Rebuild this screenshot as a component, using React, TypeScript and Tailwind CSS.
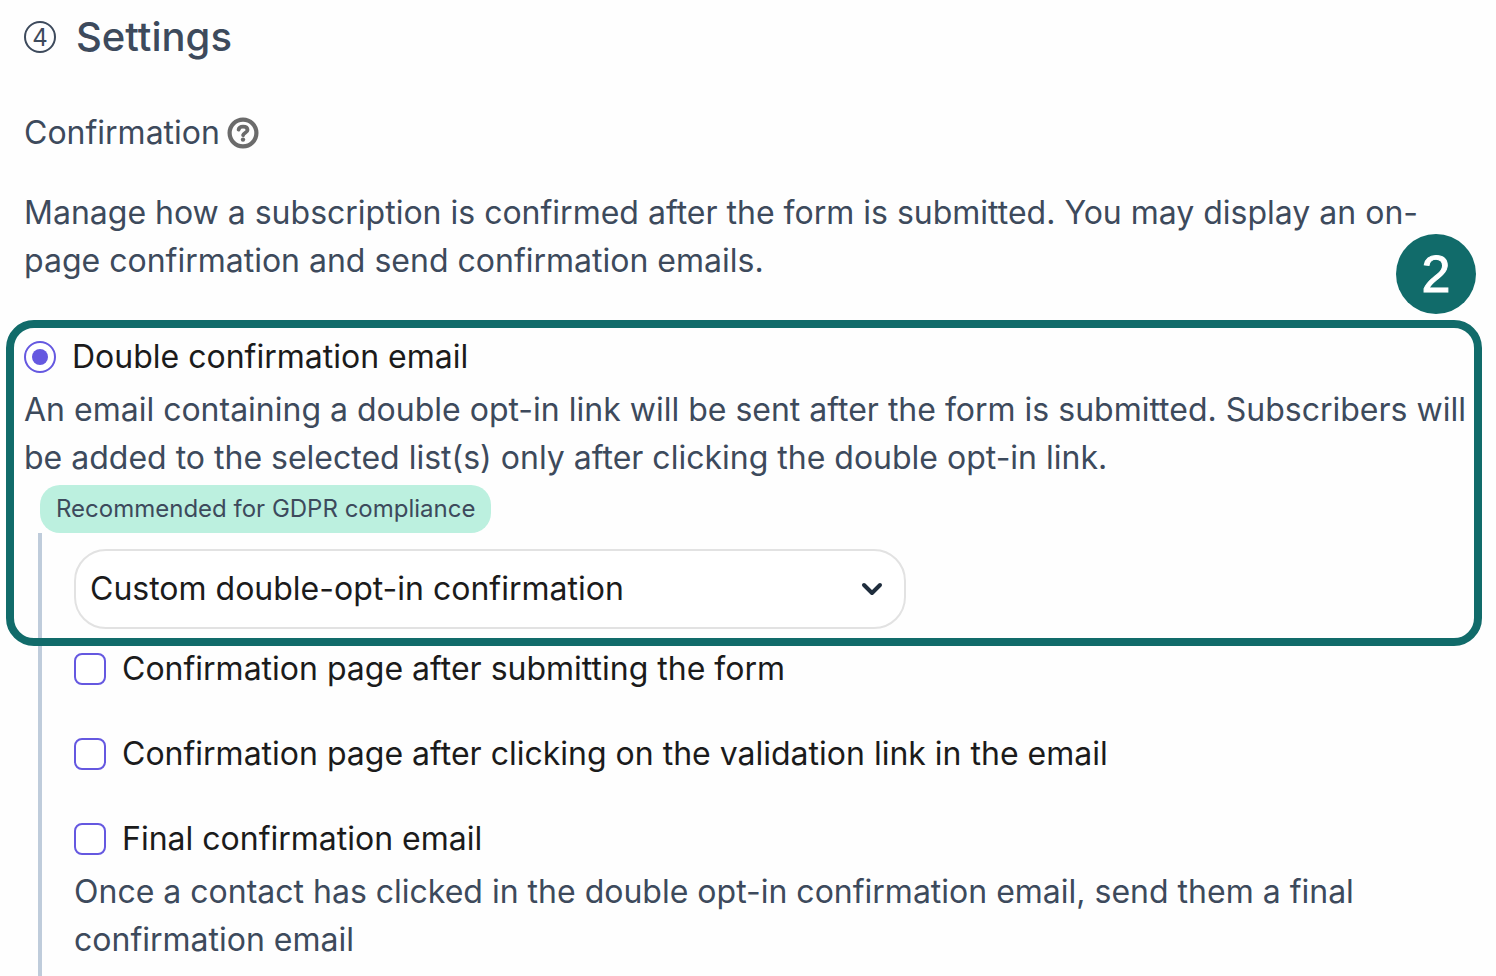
import { useState } from "react";

const checkboxClass =
  "size-8 shrink-0 appearance-none rounded-lg border-2 border-[#6558e0] bg-white checked:bg-[#6558e0]";

type OptionProps = {
  id: string;
  label: string;
};

function CheckboxOption({ id, label }: OptionProps) {
  return (
    <div className="flex items-center gap-4">
      <input type="checkbox" id={id} className={checkboxClass} />
      <label htmlFor={id} className="text-[#1b1b1b]">
        {label}
      </label>
    </div>
  );
}

function HelpIcon() {
  return (
    <svg viewBox="0 0 32 32" className="size-8" fill="none" stroke="#6b6b6b" aria-hidden="true">
      <circle cx="16" cy="16" r="13.4" strokeWidth="4.2" />
      <path d="M11.6 12.6c.4-2 2.200-3 4.400-3 2.600 0 4.500 1.200 4.500 3.300 0 2.700-3.900 2.800-4.400 5.300" strokeWidth="3.8" strokeLinecap="round" />
      <circle cx="16" cy="22.600" r="2.200" fill="#6b6b6b" stroke="none" />
    </svg>
  );
}

export default function App() {
  const [mode, setMode] = useState("double");

  return (
    <main className="min-h-screen bg-[#fefefe] px-6 pt-[13px] pb-3 font-['Inter',sans-serif] text-[32px] leading-[48px] text-[#3d4a5c]">
      <header className="flex items-center gap-5">
        <span className="flex size-8 items-center justify-center rounded-full border-2 border-[#3d4a5c] pt-0.5 text-2xl">
          4
        </span>
        <h1 className="text-[40px] leading-[48px] font-medium">Settings</h1>
      </header>

      <div className="mt-12 flex items-center gap-[7px]">
        <h2>Confirmation</h2>
        <button type="button" aria-label="Help">
          <HelpIcon />
        </button>
      </div>

      <p className="mt-8">
        Manage how a subscription is confirmed after the form is submitted. You may display an on-page
        confirmation and send confirmation emails.
      </p>

      <section className="relative mt-12">
        <div className="flex items-center gap-4">
          <input
            type="radio"
            id="double"
            name="confirmation"
            checked={mode === "double"}
            onChange={() => setMode("double")}
            className="flex size-8 shrink-0 appearance-none items-center justify-center rounded-full border-2 border-[#6558e0] bg-white before:size-4 before:rounded-full checked:before:bg-[#6558e0]"
          />
          <label htmlFor="double" className="text-[#1b1b1b]">
            Double confirmation email
          </label>
        </div>
        <p className="mt-[5px]">
          An email containing a double opt-in link will be sent after the form is submitted. Subscribers will
          be added to the selected list(s) only after clicking the double opt-in link.
        </p>
        <span className="mt-[3px] ml-4 block w-fit rounded-[20px] bg-[#bcf0df] px-4 text-2xl leading-[48px]">
          Recommended for GDPR compliance
        </span>
        <div className="ml-[14px] border-l-4 border-[#bfccdb] py-4 pl-8">
          <div className="relative max-w-[832px]">
            <select
              aria-label="Confirmation email template"
              className="block h-20 w-full appearance-none rounded-[32px] border-2 border-[#e2e2e2] bg-white px-[14px] text-[#1b1b1b]"
            >
              <option>Custom double-opt-in confirmation</option>
            </select>
            <svg
              viewBox="0 0 24 24"
              className="pointer-events-none absolute top-7 right-[22px] size-6"
              fill="none"
              stroke="#1f2d3d"
              strokeWidth="4"
              strokeLinecap="round"
              strokeLinejoin="round"
              aria-hidden="true"
            >
              <path d="M4 8l8 8 8-8" />
            </svg>
          </div>
        </div>

        {/* callout frame and its step number */}
        <div className="pointer-events-none absolute -top-[13px] -right-[10px] -bottom-px -left-[18px] z-10 rounded-[28px] border-8 border-[#116b6a]">
          <span className="absolute -top-[94px] -right-[2px] flex size-20 items-center justify-center rounded-full bg-[#116b6a] font-['Liberation_Sans',Arial,sans-serif] text-[52px] text-white [-webkit-text-stroke:1px_white]">
            2
          </span>
        </div>
      </section>

      <div className="ml-[14px] -mb-3 flex flex-col gap-[37px] border-l-4 border-[#bfccdb] pb-3 pl-8">
        <CheckboxOption id="page-submit" label="Confirmation page after submitting the form" />
        <CheckboxOption
          id="page-validate"
          label="Confirmation page after clicking on the validation link in the email"
        />
        <div>
          <CheckboxOption id="final-email" label="Final confirmation email" />
          <p className="mt-[5px]">
            Once a contact has clicked in the double opt-in confirmation email, send them a final confirmation
            email
          </p>
        </div>
      </div>
    </main>
  );
}
